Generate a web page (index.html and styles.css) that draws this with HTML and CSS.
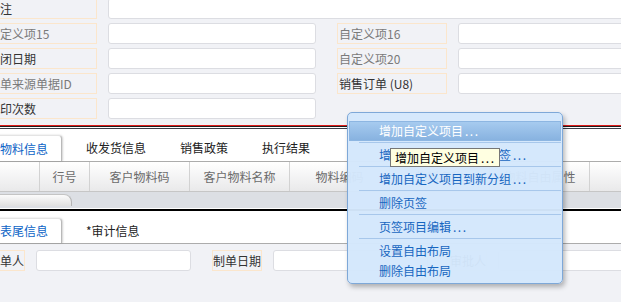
FILE: index.html
```html
<!DOCTYPE html>
<html lang="zh-CN">
<head>
    <meta charset="UTF-8">
    <title>销售订单 - 表单设计</title>
    <link rel="stylesheet" href="styles.css">
</head>
<body>
    <div class="page">
        <!-- 表头字段 -->
        <div class="head-form">
            <div class="row">
                <div class="lbl">备注</div>
                <div class="inp fill"></div>
            </div>
            <div class="row">
                <div class="lbl muted">自定义项15</div>
                <div class="inp"></div>
                <div class="lbl lbl-right muted">自定义项16</div>
                <div class="inp fill"></div>
            </div>
            <div class="row">
                <div class="lbl">关闭日期</div>
                <div class="inp"></div>
                <div class="lbl lbl-right muted">自定义项20</div>
                <div class="inp fill"></div>
            </div>
            <div class="row">
                <div class="lbl muted">原单来源单据ID</div>
                <div class="inp"></div>
                <div class="lbl lbl-right">销售订单 (U8)</div>
                <div class="inp fill"></div>
            </div>
            <div class="row">
                <div class="lbl">打印次数</div>
                <div class="inp"></div>
            </div>
        </div>

        <div class="rule"></div>

        <!-- 表体页签 -->
        <div class="tabs">
            <div class="tab active">物料信息</div>
            <div class="tab">收发货信息</div>
            <div class="tab">销售政策</div>
            <div class="tab">执行结果</div>
        </div>
        <div class="grid-head">
            <div class="col col-first"></div>
            <div class="col col-no">行号</div>
            <div class="col">客户物料码</div>
            <div class="col">客户物料名称</div>
            <div class="col">物料编码</div>
            <div class="col">物料名称</div>
            <div class="col">物料自由属性</div>
            <div class="col">数量</div>
        </div>
        <div class="scroll-band">
            <div class="scroll-tab"></div>
        </div>

        <div class="rule-dark"></div>

        <!-- 表尾页签 -->
        <div class="tabs tabs-foot">
            <div class="tab active">表尾信息</div>
            <div class="tab">*审计信息</div>
        </div>
        <div class="foot-form">
            <div class="row">
                <div class="lbl lbl-auto lbl-first">制单人</div>
                <div class="inp inp-short"></div>
                <div class="lbl lbl-auto lbl-right">制单日期</div>
                <div class="inp inp-short"></div>
                <div class="lbl lbl-auto lbl-right">审批人</div>
                <div class="inp fill"></div>
            </div>
        </div>
    </div>

    <!-- 右键菜单 -->
    <div class="menu">
        <div class="menu-item selected">增加自定义项目<span class="dots">...</span></div>
        <div class="menu-sep"></div>
        <div class="menu-item">增加自定义项目到新页签<span class="dots">...</span></div>
        <div class="menu-sep"></div>
        <div class="menu-item">增加自定义项目到新分组<span class="dots">...</span></div>
        <div class="menu-sep"></div>
        <div class="menu-item">删除页签</div>
        <div class="menu-sep"></div>
        <div class="menu-item">页签项目编辑<span class="dots">...</span></div>
        <div class="menu-sep"></div>
        <div class="menu-item">设置自由布局</div>
        <div class="menu-item">删除自由布局</div>
    </div>

    <div class="tip">增加自定义项目<span class="dots">...</span></div>
</body>
</html>
```

FILE: styles.css
```css
body {
    margin: 0;
    width: 621px;
    height: 302px;
    overflow: hidden;
    background: #f1f2f6;
    font-family: "Noto Sans CJK SC", sans-serif;
    font-size: 12px;
    color: #333;
}

/* the window is scrolled a little to the left */
.page {
    margin-left: -14px;
    width: 680px;
}

/* ---------- form rows ---------- */
.head-form {
    margin-top: -2px;
    padding-bottom: 6px;
    display: flex;
    flex-direction: column;
    gap: 4px;
}

.row {
    display: flex;
    height: 21px;
}

.lbl {
    box-sizing: border-box;
    width: 111px;
    height: 21px;
    line-height: 19px;
    padding-left: 1px;
    border: 1px solid #fbe6cc;
    white-space: nowrap;
    overflow: hidden;
    color: #333;
}

.lbl.muted {
    color: #7a7a7a;
}

.lbl-right {
    margin-left: 21px;
    width: 110px;
}

.lbl-auto {
    width: auto;
    padding: 0;
}

.inp {
    box-sizing: border-box;
    width: 208px;
    height: 21px;
    margin-left: 11px;
    background: #fff;
    border: 1px solid #dcdde2;
    border-radius: 3px;
}

.inp.fill {
    flex: 1;
}

.inp.inp-short {
    width: 155px;
}

/* ---------- separators ---------- */
.rule {
    height: 4px;
    background: linear-gradient(to bottom,
        #e01c1c 0, #e01c1c 1px,
        #1e1e1e 1px, #1e1e1e 2px,
        #ffffff 2px, #ffffff 3px,
        #3a3f4a 3px, #3a3f4a 4px);
}

.rule-dark {
    height: 3px;
    background: linear-gradient(to bottom,
        #ffffff 0, #ffffff 1px,
        #000 1px, #000 3px);
}

/* ---------- tabs ---------- */
.tabs {
    display: flex;
    align-items: flex-end;
    height: 32px;
    background: #fff;
    border-bottom: 1px solid #acacac;
}

.tab {
    height: 26px;
    line-height: 26px;
    padding: 0 17px;
    color: #222;
    font-size: 12px;
}

.tab.active {
    padding: 0 13px 0 14px;
    margin-right: 7px;
    color: #0b63c6;
    background: #fff;
    border-top: 1px solid #e4e4e4;
    border-right: 1px solid #b9b9b9;
    border-radius: 0 4px 0 0;
    box-shadow: 1px 0 2px rgba(0, 0, 0, 0.18);
    height: 25px;
    line-height: 25px;
}

.tabs-foot .tab {
    height: 25px;
    line-height: 25px;
}

.tabs-foot .tab.active {
    height: 24px;
    line-height: 24px;
}

/* ---------- grid header ---------- */
.grid-head {
    display: flex;
    height: 29px;
    border-bottom: 1px solid #c6c6c6;
    background: linear-gradient(to bottom, #ffffff, #e9e9ea);
}

.col {
    box-sizing: border-box;
    width: 100px;
    flex-shrink: 0;
    line-height: 29px;
    text-align: center;
    color: #6b6b6b;
    border-right: 1px solid #d2d2d2;
    white-space: nowrap;
    overflow: hidden;
}

.col-first {
    width: 54px;
}

.col-no {
    width: 50px;
}

.scroll-band {
    height: 14px;
    padding-top: 2px;
    background: #dcdfe4;
}

.scroll-tab {
    box-sizing: border-box;
    width: 86px;
    height: 12px;
    border-top: 1px solid #c4c4c4;
    border-right: 1px solid #b4b4b4;
    border-radius: 0 8px 0 0;
    background: linear-gradient(to bottom, #fbfbfb, #e0e0e0);
}

/* ---------- footer form ---------- */
.foot-form {
    padding-top: 6px;
    height: 60px;
}

.lbl-first {
    padding-left: 1px;
}

/* ---------- context menu ---------- */
.menu {
    position: absolute;
    left: 347px;
    top: 112px;
    box-sizing: border-box;
    width: 216px;
    height: 172px;
    padding: 8px 1px 2px 1px;
    background: rgba(212, 231, 252, 0.97);
    border: 1px solid #7ea8d8;
    border-radius: 5px;
    box-shadow: 2px 3px 5px rgba(0, 0, 0, 0.28);
}

.menu-item {
    height: 20px;
    line-height: 20px;
    padding-left: 30px;
    color: #1766c0;
    white-space: nowrap;
}

.menu-item.selected {
    color: #fff;
    background: linear-gradient(to bottom, #a8ccf0, #86b1df);
    box-shadow: inset 0 0 0 1px #8db6e2;
}

.menu-sep {
    height: 1px;
    margin: 1px 0 2px 10px;
    background: #a7c7eb;
}

.dots {
    letter-spacing: 1.5px;
    margin-left: 2px;
}

.tip {
    position: absolute;
    left: 390px;
    top: 148px;
    box-sizing: border-box;
    width: 110px;
    height: 19px;
    line-height: 17px;
    padding-left: 4px;
    background: #ffffe1;
    border: 1px solid #767676;
    color: #000;
    white-space: nowrap;
}
```
